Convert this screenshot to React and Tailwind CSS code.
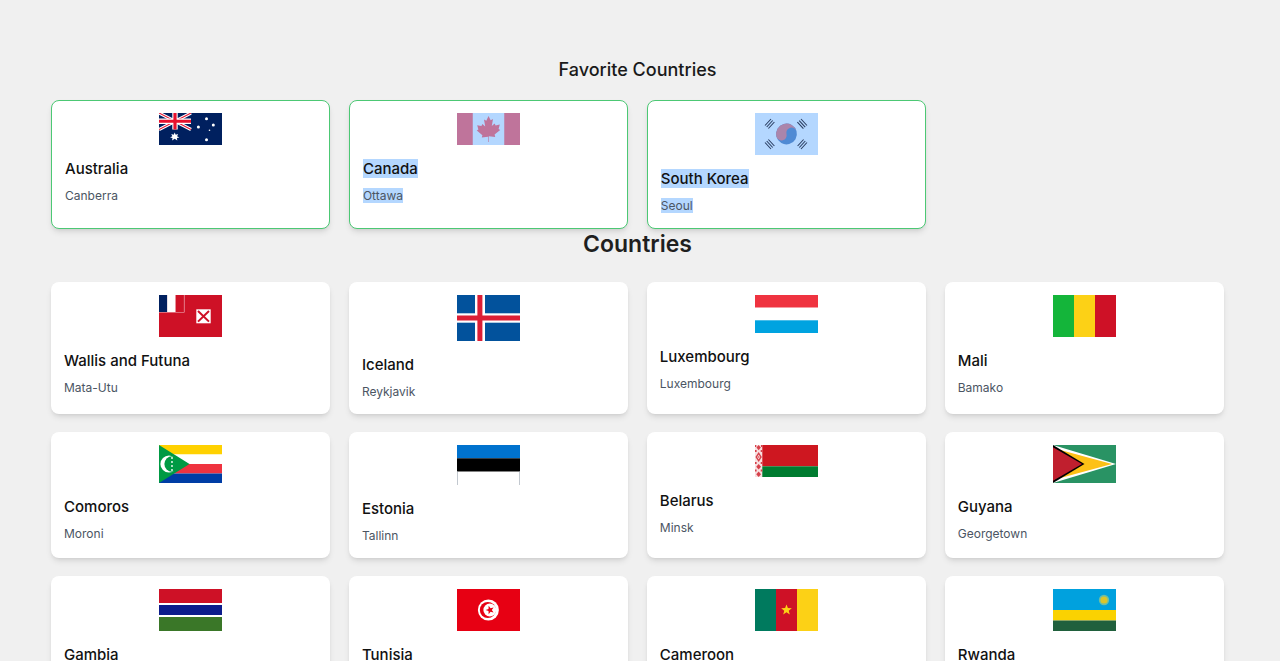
import React from 'react';

const Svg = ({ h, children }) => (
  <svg viewBox={`0 0 63 ${h}`} preserveAspectRatio="none" width="63" height={h} className="block mx-auto shrink-0">
    {children}
  </svg>
);

const R = ({ x = 0, y = 0, w = 63, h, f }) => <rect x={x} y={y} width={w} height={h} fill={f} />;

// five point star, rot in degrees (0 = tip up)
const starPoints = (cx, cy, r, rot = 0) =>
  Array.from({ length: 10 }, (_, i) => {
    const rad = i % 2 ? r * 0.42 : r;
    const a = ((rot + i * 36 - 90) * Math.PI) / 180;
    return `${(cx + rad * Math.cos(a)).toFixed(2)},${(cy + rad * Math.sin(a)).toFixed(2)}`;
  }).join(' ');

const Australia = () => (
  <Svg h={32}>
    <R h={32} f="#00205f" />
    <g>
      <path d="M0 0L32 16.5M32 0L0 16.5" stroke="#fff" strokeWidth="3.2" />
      <path d="M0 0L32 16.5M32 0L0 16.5" stroke="#e8112d" strokeWidth="1.1" />
      <path d="M16 0V16.5M0 8.25H32" stroke="#fff" strokeWidth="5.4" />
      <path d="M16 0V16.5M0 8.25H32" stroke="#e8112d" strokeWidth="3.2" />
    </g>
    <path d="M15.7 19.5l1 2.3 2.4-.8-1 2.3 2.2 1.1-2.4.7.4 2.5-2.6-1.8-2.6 1.8.4-2.5-2.4-.7 2.2-1.1-1-2.3 2.4.8z" fill="#fff" />
    <circle cx="47.5" cy="5.7" r="1.5" fill="#fff" />
    <circle cx="54.3" cy="12" r="1.5" fill="#fff" />
    <circle cx="39.4" cy="14" r="1.5" fill="#fff" />
    <circle cx="50.5" cy="17.3" r="0.8" fill="#fff" />
    <circle cx="47.5" cy="26.7" r="1.5" fill="#fff" />
  </Svg>
);

const Canada = () => (
  <Svg h={32}>
    <R h={32} f="#b4d7ff" />
    <R w={15.75} h={32} f="#bf749b" />
    <R x={47.25} w={15.75} h={32} f="#bf749b" />
    <path
      d="M31.5 3l2.2 4.2 2.3-1.2-1.2 7 2.8-2.6 1 2 4.2-.8-1.2 4.4 1.6 1-5.6 4.6.6 2.4-6.2-.8h-.2V29h-.6v-5.2h-.2l-6.2.8.6-2.4-5.6-4.6 1.6-1-1.2-4.4 4.2.8 1-2 2.8 2.6-1.2-7 2.3 1.2z"
      fill="#bf749b"
    />
  </Svg>
);

const Korea = () => (
  <Svg h={42}>
    <R h={42} f="#b4d7ff" />
    <g transform="rotate(-15 31.5 21)">
      <circle cx="31.5" cy="21" r="10.4" fill="#4f8ad4" />
      <path d="M21.1 21a10.4 10.4 0 0 1 20.8 0a5.2 5.2 0 0 0-10.4 0a5.2 5.2 0 0 1-10.4 0z" fill="#ab85ab" />
    </g>
    <g stroke="#2b3f63" strokeWidth="1.1">
      <path d="M10 12.5l6-6.5M11.7 14l6-6.5M13.4 15.5l6-6.5" />
      <path d="M46 6l6 6.5M44.2 7.6l6 6.5M42.4 9.2l6 6.5" />
      <path d="M10 29.5l6 6.5M11.7 28l6 6.5M13.4 26.5l6 6.5" />
      <path d="M52 29.5l-6 6.5M50.3 28l-6 6.5M48.6 26.5l-6 6.5" />
    </g>
  </Svg>
);

const Wallis = () => (
  <Svg h={42}>
    <R h={42} f="#ce1126" />
    <R w={25.5} h={17.5} f="#f4c4ca" />
    <R w={8.3} h={17} f="#00205f" />
    <R x={8.3} w={8.3} h={17} f="#fff" />
    <R x={16.6} w={8.3} h={17} f="#ce1126" />
    <R x={37.3} y={14.3} w={14.4} h={14} f="#fff" />
    <path d="M39 16l11 10.6M50 16L39 26.6" stroke="#ce1126" strokeWidth="2" />
  </Svg>
);

const Iceland = () => (
  <Svg h={46}>
    <R h={46} f="#02529c" />
    <R x={18} w={10} h={46} f="#fff" />
    <R y={18.3} h={9.4} f="#fff" />
    <R x={20.4} w={5} h={46} f="#dc1e35" />
    <R y={20.5} h={5} f="#dc1e35" />
  </Svg>
);

const Luxembourg = () => (
  <Svg h={38}>
    <R h={12.7} f="#ef3340" />
    <R y={12.7} h={12.6} f="#fff" />
    <R y={25.3} h={12.7} f="#00a3e0" />
  </Svg>
);

const Mali = () => (
  <Svg h={42}>
    <R w={21} h={42} f="#14b53a" />
    <R x={21} w={21} h={42} f="#fcd116" />
    <R x={42} w={21} h={42} f="#ce1126" />
  </Svg>
);

const Comoros = () => (
  <Svg h={38}>
    <R h={9.5} f="#ffd100" />
    <R y={9.5} h={9.5} f="#fff" />
    <R y={19} h={9.5} f="#ef3340" />
    <R y={28.5} h={9.5} f="#003da5" />
    <path d="M0 0L30.5 19L0 38z" fill="#009a44" />
    <circle cx="10" cy="19" r="8.6" fill="#fff" />
    <circle cx="13.2" cy="19" r="7.8" fill="#009a44" />
    <g fill="#fff">
      <circle cx="13" cy="13" r="0.9" />
      <circle cx="13" cy="17" r="0.9" />
      <circle cx="13" cy="21" r="0.9" />
      <circle cx="13" cy="25" r="0.9" />
    </g>
  </Svg>
);

const Estonia = () => (
  <Svg h={40}>
    <R h={13.3} f="#0072ce" />
    <R y={13.3} h={13.4} f="#000" />
    <R y={26.7} h={13.3} f="#fff" />
    <R y={26.7} w={0.7} h={13.3} f="#a8b0ba" />
    <R x={62.3} y={26.7} w={0.7} h={13.3} f="#a8b0ba" />
  </Svg>
);

const Belarus = () => (
  <Svg h={32}>
    <R h={21.3} f="#ce1720" />
    <R y={21.3} h={10.7} f="#007c30" />
    <R w={7.3} h={32} f="#f8dfe0" />
    <g fill="#d6404a">
      <path d="M3.65 0l2.2 2.6-2.2 2.6-2.2-2.6z" />
      <path d="M0 0h1.3v2H0zM6 0h1.3v2H6zM0 5h1.6v2H0zM5.7 5h1.6v2H5.7z" />
      <path d="M3.65 7l3.2 5-3.2 5-3.2-5z" />
      <path d="M3.65 19l2.4 2.8-2.4 2.8-2.4-2.8z" />
      <path d="M0 17h1.6v2H0zM5.7 17h1.6v2H5.7zM0 24.5h1.6v2H0zM5.7 24.5h1.6v2H5.7z" />
      <path d="M3.65 26.5l2.4 2.8-2.4 2.7-2.4-2.7z" />
    </g>
    <path d="M3.65 9.6l1.5 2.4-1.5 2.4-1.5-2.4z" fill="#f8dfe0" />
    <circle cx="3.65" cy="12" r="0.7" fill="#d6404a" />
  </Svg>
);

const Guyana = () => (
  <Svg h={38}>
    <R h={38} f="#299364" />
    <path d="M0 0L63 19L0 38z" fill="#fff" />
    <path d="M0 3L59 19L0 35z" fill="#fdc116" />
    <path d="M0 0L31.5 19L0 38z" fill="#000" />
    <path d="M0 2.2L29 19L0 35.8z" fill="#c01f2e" />
  </Svg>
);

const Gambia = () => (
  <Svg h={42}>
    <R h={14} f="#ce1126" />
    <R y={14} h={2} f="#fff" />
    <R y={16} h={10} f="#0c1c8c" />
    <R y={26} h={2} f="#fff" />
    <R y={28} h={14} f="#3a7728" />
  </Svg>
);

const Tunisia = () => (
  <Svg h={42}>
    <R h={42} f="#e70013" />
    <circle cx="31.4" cy="21" r="10.5" fill="#fff" />
    <circle cx="30.8" cy="21" r="8" fill="#e70013" />
    <circle cx="32.8" cy="21" r="6.4" fill="#fff" />
    <polygon points={starPoints(33, 21, 4.4, -90)} fill="#e70013" />
  </Svg>
);

const Cameroon = () => (
  <Svg h={42}>
    <R w={21} h={42} f="#007a5e" />
    <R x={21} w={21} h={42} f="#ce1126" />
    <R x={42} w={21} h={42} f="#fcd116" />
    <polygon points={starPoints(31.5, 21, 5.6)} fill="#fcd116" />
  </Svg>
);

const Rwanda = () => (
  <Svg h={42}>
    <R h={21} f="#00a1de" />
    <R y={21} h={10.5} f="#fad201" />
    <R y={31.5} h={10.5} f="#20603d" />
    <circle cx="51" cy="11" r="5.2" fill="#6fbfa0" />
    <circle cx="51" cy="11" r="3.6" fill="#dcc52a" />
  </Svg>
);

const favorites = [
  { name: 'Australia', capital: 'Canberra', Flag: Australia },
  { name: 'Canada', capital: 'Ottawa', Flag: Canada, selected: true },
  { name: 'South Korea', capital: 'Seoul', Flag: Korea, selected: true },
];

const countries = [
  { name: 'Wallis and Futuna', capital: 'Mata-Utu', Flag: Wallis },
  { name: 'Iceland', capital: 'Reykjavik', Flag: Iceland },
  { name: 'Luxembourg', capital: 'Luxembourg', Flag: Luxembourg },
  { name: 'Mali', capital: 'Bamako', Flag: Mali },
  { name: 'Comoros', capital: 'Moroni', Flag: Comoros },
  { name: 'Estonia', capital: 'Tallinn', Flag: Estonia },
  { name: 'Belarus', capital: 'Minsk', Flag: Belarus },
  { name: 'Guyana', capital: 'Georgetown', Flag: Guyana },
  { name: 'Gambia', capital: 'Banjul', Flag: Gambia },
  { name: 'Tunisia', capital: 'Tunis', Flag: Tunisia },
  { name: 'Cameroon', capital: 'Yaoundé', Flag: Cameroon },
  { name: 'Rwanda', capital: 'Kigali', Flag: Rwanda },
];

function CountryCard({ name, capital, Flag, selected, favorite }) {
  const mark = selected ? 'bg-[#b4d7ff]' : '';
  return (
    <div
      className={`bg-white rounded-lg shadow-md flex flex-col px-[13px] ${
        favorite ? 'border border-[#4cc874] pt-[12px] pb-[15px]' : 'pt-[13px] pb-[14.5px]'
      }`}
    >
      <Flag />
      <p className="mt-[14px] text-[15px] leading-[19px] font-medium text-[#111]">
        <span className={mark}>{name}</span>
      </p>
      <p className="mt-[10px] text-[12px] leading-[15px] text-[#4b5563]">
        <span className={mark}>{capital}</span>
      </p>
    </div>
  );
}

export default function App() {
  return (
    <div className="min-h-screen bg-[#f0f0f0] font-['Inter',sans-serif]">
      <div className="ml-[51px] w-[1173px] pt-[58px]">
        <h2 className="text-center text-[18px] leading-[24px] font-medium text-[#1a1a1a]">Favorite Countries</h2>
        <div className="grid grid-cols-4 gap-[18.67px] mt-[18px]">
          {favorites.map((c) => (
            <CountryCard key={c.name} {...c} favorite />
          ))}
        </div>
        <h1 className="text-center text-[23px] leading-[30px] font-semibold text-[#1f1f1f]">Countries</h1>
        <div className="grid grid-cols-4 gap-[18.67px] mt-[23px] pb-10">
          {countries.map((c) => (
            <CountryCard key={c.name} {...c} />
          ))}
        </div>
      </div>
    </div>
  );
}
